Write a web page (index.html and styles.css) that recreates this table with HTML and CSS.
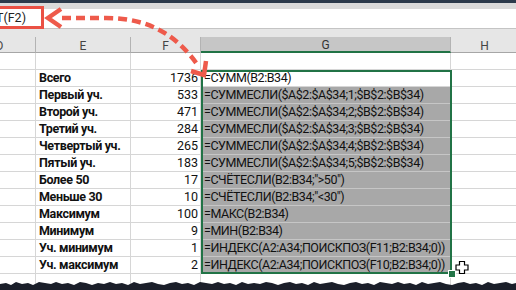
FILE: index.html
```html
<!DOCTYPE html>
<html lang="ru">
<head>
<meta charset="utf-8">
<title>Sheet</title>
<link rel="stylesheet" href="styles.css">
</head>
<body>
<div class="app">
  <div class="topbar"></div>
  <div class="ribbon"></div>
  <div class="fbar">
    <div class="namebox"><span>=ФОРМУЛАТЕКСТ(F2)</span></div>
  </div>
  <div class="strip"></div>
  <div class="sheet">
    <div class="hdr">D</div><div class="hdr">E</div><div class="hdr">F</div><div class="hdr hsel">G</div><div class="hdr">H</div><div class="hdr hlast"></div>

    <div class="c"></div><div class="c"></div><div class="c"></div><div class="c"></div><div class="c"></div><div class="c"></div>

    <div class="c"></div><div class="c lbl">Всего</div><div class="c num">1736</div><div class="c fx">=СУММ(B2:B34)</div><div class="c"></div><div class="c"></div>
    <div class="c"></div><div class="c lbl">Первый уч.</div><div class="c num">533</div><div class="c fx hl">=СУММЕСЛИ($A$2:$A$34;1;$B$2:$B$34)</div><div class="c"></div><div class="c"></div>
    <div class="c"></div><div class="c lbl">Второй уч.</div><div class="c num">471</div><div class="c fx hl">=СУММЕСЛИ($A$2:$A$34;2;$B$2:$B$34)</div><div class="c"></div><div class="c"></div>
    <div class="c"></div><div class="c lbl">Третий уч.</div><div class="c num">284</div><div class="c fx hl">=СУММЕСЛИ($A$2:$A$34;3;$B$2:$B$34)</div><div class="c"></div><div class="c"></div>
    <div class="c"></div><div class="c lbl">Четвертый уч.</div><div class="c num">265</div><div class="c fx hl">=СУММЕСЛИ($A$2:$A$34;4;$B$2:$B$34)</div><div class="c"></div><div class="c"></div>
    <div class="c"></div><div class="c lbl">Пятый уч.</div><div class="c num">183</div><div class="c fx hl">=СУММЕСЛИ($A$2:$A$34;5;$B$2:$B$34)</div><div class="c"></div><div class="c"></div>
    <div class="c"></div><div class="c lbl">Более 50</div><div class="c num">17</div><div class="c fx hl">=СЧЁТЕСЛИ(B2:B34;"&gt;50")</div><div class="c"></div><div class="c"></div>
    <div class="c"></div><div class="c lbl">Меньше 30</div><div class="c num">10</div><div class="c fx hl">=СЧЁТЕСЛИ(B2:B34;"&lt;30")</div><div class="c"></div><div class="c"></div>
    <div class="c"></div><div class="c lbl">Максимум</div><div class="c num">100</div><div class="c fx hl">=МАКС(B2:B34)</div><div class="c"></div><div class="c"></div>
    <div class="c"></div><div class="c lbl">Минимум</div><div class="c num">9</div><div class="c fx hl">=МИН(B2:B34)</div><div class="c"></div><div class="c"></div>
    <div class="c"></div><div class="c lbl">Уч. минимум</div><div class="c num">1</div><div class="c fx hl">=ИНДЕКС(A2:A34;ПОИСКПОЗ(F11;B2:B34;0))</div><div class="c"></div><div class="c"></div>
    <div class="c"></div><div class="c lbl">Уч. максимум</div><div class="c num">2</div><div class="c fx hl">=ИНДЕКС(A2:A34;ПОИСКПОЗ(F10;B2:B34;0))</div><div class="c"></div><div class="c"></div>

    <div class="c"></div><div class="c"></div><div class="c"></div><div class="c"></div><div class="c"></div><div class="c"></div>

    <div class="selection"></div>
    <div class="handle"></div>
  </div>

  <svg class="arrow" width="516" height="290" viewBox="0 0 516 290">
    <path d="M62 18 L106 18 C150 18 178 36 199 67" fill="none" stroke="#ee5a4b" stroke-width="4.5" stroke-dasharray="9 5"/>
    <polyline points="61,9 48,18 61,27" fill="none" stroke="#ee5a4b" stroke-width="4.5" stroke-linejoin="miter"/>
    <polyline points="191,71 204,75 206,61" fill="none" stroke="#ee5a4b" stroke-width="4.5" stroke-linejoin="miter"/>
  </svg>

  <svg class="cursor" width="516" height="290" viewBox="0 0 516 290">
    <path d="M459.5 261.5 h5 v3.5 h3.5 v5 h-3.5 v3.5 h-5 v-3.5 h-3.5 v-5 h3.5 z" fill="#fff" stroke="#000" stroke-width="1.2"/>
  </svg>

  <div class="torn">
    <svg width="516" height="10" viewBox="0 0 516 10" preserveAspectRatio="none">
      <polygon fill="#1b1f2a" points="0,10 0,4 6,3 11,5 16,2 22,4 28,3 33,5 39,2 45,3 51,4 56,2 62,4 68,3 74,5 80,2 86,3 92,5 98,3 104,4 110,2 116,4 122,3 128,5 134,2 140,4 146,3 152,2 158,4 164,5 170,3 176,2 182,4 188,3 194,5 200,2 206,3 212,4 218,2 224,4 230,3 236,5 242,2 248,4 254,3 260,4 266,2 272,3 278,5 284,3 290,2 296,4 302,3 308,5 314,2 320,4 326,3 332,2 338,4 344,5 350,3 356,2 362,4 368,3 374,5 380,2 386,3 392,4 398,2 404,4 410,3 416,5 422,2 428,4 434,3 440,2 446,4 452,5 458,3 464,2 470,4 476,3 482,5 488,2 494,4 500,3 506,2 512,4 516,3 516,10"/>
    </svg>
  </div>
</div>
</body>
</html>
```

FILE: styles.css
```css
* { box-sizing: border-box; }

html, body {
  margin: 0;
  padding: 0;
  background: #fff;
}

.app {
  position: relative;
  width: 516px;
  height: 290px;
  overflow: hidden;
  font-family: "Roboto", "Liberation Sans", sans-serif;
  font-size: 12px;
  color: #111;
}

.topbar {
  height: 3px;
  background: #2c3a4b;
}

.ribbon {
  height: 6px;
  background: #dadada;
}

.fbar {
  height: 20px;
  background: #fff;
  border-bottom: 1px solid #c4c4c4;
  display: flex;
  align-items: flex-start;
}

.namebox {
  position: relative;
  z-index: 1;
  width: 47px;
  height: 23px;
  margin-left: -3px;
  margin-top: -3px;
  border: 3px solid #ea5144;
  display: flex;
  justify-content: flex-end;
  align-items: center;
  padding-right: 15px;
  overflow: hidden;
  white-space: nowrap;
  color: #222;
  font-size: 12.5px;
}

.strip {
  height: 8px;
  background: #e6e6e6;
}

.sheet {
  position: relative;
  margin-left: -36px;
  display: grid;
  grid-template-columns: 72px 95px 70px 250px 68px 60px;
  grid-template-rows: 16px repeat(14, 17px);
}

.hdr {
  background: #e6e6e6;
  border-right: 1px solid #b3b3b3;
  border-bottom: 1px solid #a6a6a6;
  color: #444;
  font-size: 12px;
  display: flex;
  align-items: center;
  justify-content: center;
  line-height: 1;
  padding-top: 2px;
}

.hsel {
  background: #c6c6c6;
  border-bottom: 2px solid #217346;
  color: #333;
}

.hlast { border-right: none; }

.c {
  border-right: 1px solid #d6d6d6;
  border-bottom: 1px solid #d6d6d6;
  white-space: nowrap;
  overflow: hidden;
  display: flex;
  align-items: center;
  line-height: 16px;
  font-size: 12.5px;
}

.lbl {
  font-weight: 700;
  padding-left: 3px;
  letter-spacing: -0.35px;
}

.num {
  justify-content: flex-end;
  padding-right: 2px;
}

.fx {
  padding-left: 3px;
  overflow: visible;
  letter-spacing: -0.45px;
}

.hl {
  background: #a8a8a8;
  border-bottom-color: #c6c6c6;
}

.selection {
  position: absolute;
  left: 237px;
  top: 33px;
  width: 251px;
  height: 204px;
  border: 2px solid #217346;
  pointer-events: none;
}

.handle {
  position: absolute;
  left: 484px;
  top: 233px;
  width: 6px;
  height: 6px;
  background: #217346;
  border: 1px solid #fff;
  box-sizing: content-box;
}

.arrow, .cursor {
  position: absolute;
  left: 0;
  top: 0;
  pointer-events: none;
}

.torn {
  position: absolute;
  left: 0;
  bottom: 0;
  width: 516px;
  height: 10px;
  line-height: 0;
}

.torn svg { display: block; }
```
